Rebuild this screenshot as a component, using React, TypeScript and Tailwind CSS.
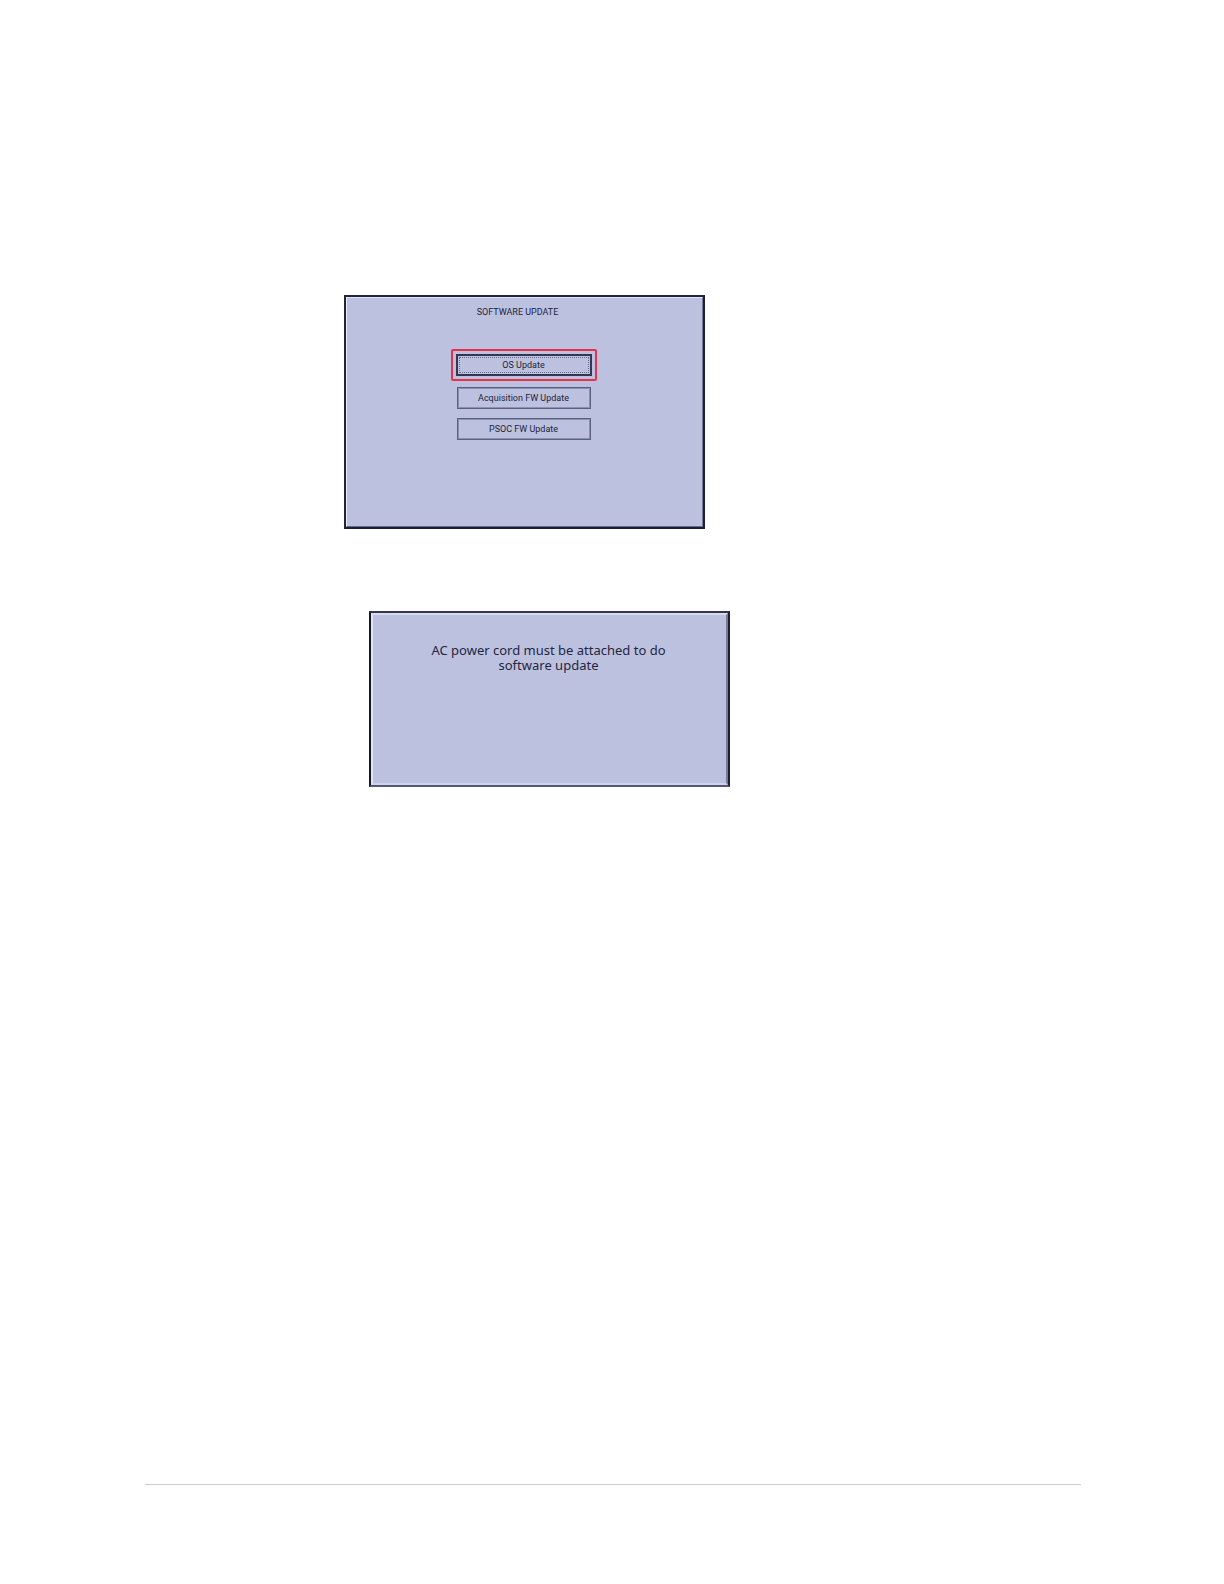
import type { ReactNode } from "react";

function UpdateButton({ children }: { children: ReactNode }) {
  return (
    <button
      type="button"
      className="flex h-[22px] w-full items-center justify-center border border-[#5c5f7f] text-[9px] leading-3 text-[#1c1e38] shadow-[inset_0_0_0_1px_#8d90b2]"
    >
      {children}
    </button>
  );
}

export default function App() {
  return (
    <div className="flex min-h-screen flex-col bg-white font-['Noto_Sans','Open_Sans',sans-serif]">
      <main className="flex grow flex-col items-start pt-[295px] pl-[344px]">
        <section className="flex h-[234px] w-full max-w-[361px] flex-col items-center border-2 border-t-[#22243a] border-r-[#1c1e38] border-b-[#1c1e38] border-l-[#22243a] bg-[#bdc1e0] font-[Roboto,'Noto_Sans',sans-serif]">
          <div className="flex w-full grow flex-col items-center border-t border-r border-b border-l border-t-[#e2e4f3] border-r-[#777a9e] border-b-[#666989] border-l-[#e8eaf6] pt-2 pr-[2px]">
            <h1 className="pr-3 text-[9px] leading-3 text-[#1c1e38]">SOFTWARE UPDATE</h1>
            <div className="mt-[31px] flex w-[146px] flex-col items-center">
              <div className="w-full rounded-xs border-2 border-[#e8304a] p-[3px]">
                <button
                  type="button"
                  className="flex h-[22px] w-full border-2 border-[#34374f] p-px text-[9px] leading-3 text-[#1c1e38]"
                >
                  <span className="flex h-full w-full items-center justify-center border border-dotted border-[#6a6d8d]">
                    OS Update
                  </span>
                </button>
              </div>
              <div className="mt-[6px] flex w-[134px] flex-col gap-[9px]">
                <UpdateButton>Acquisition FW Update</UpdateButton>
                <UpdateButton>PSOC FW Update</UpdateButton>
              </div>
            </div>
          </div>
        </section>

        <section className="mt-[82px] ml-[25px] flex h-[176px] w-full max-w-[361px] border-2 border-t-[#35374d] border-r-[#1c1e32] border-b-[#555872] border-l-[#15172b] bg-[#bdc1e0]">
          <div className="flex grow justify-center border-2 border-t-[#d8dbee] border-r-[#777a9e] border-b-[#cfd2ea] border-l-[#e2e4f3] pt-7 pr-[2px]">
            <p className="w-60 text-center text-[13px] leading-[15px] text-[#24263f]">
              AC power cord must be attached to do software update
            </p>
          </div>
        </section>
      </main>
      <footer className="mr-[143px] ml-[145px] h-[100px] border-t border-[#cccccc]" />
    </div>
  );
}
